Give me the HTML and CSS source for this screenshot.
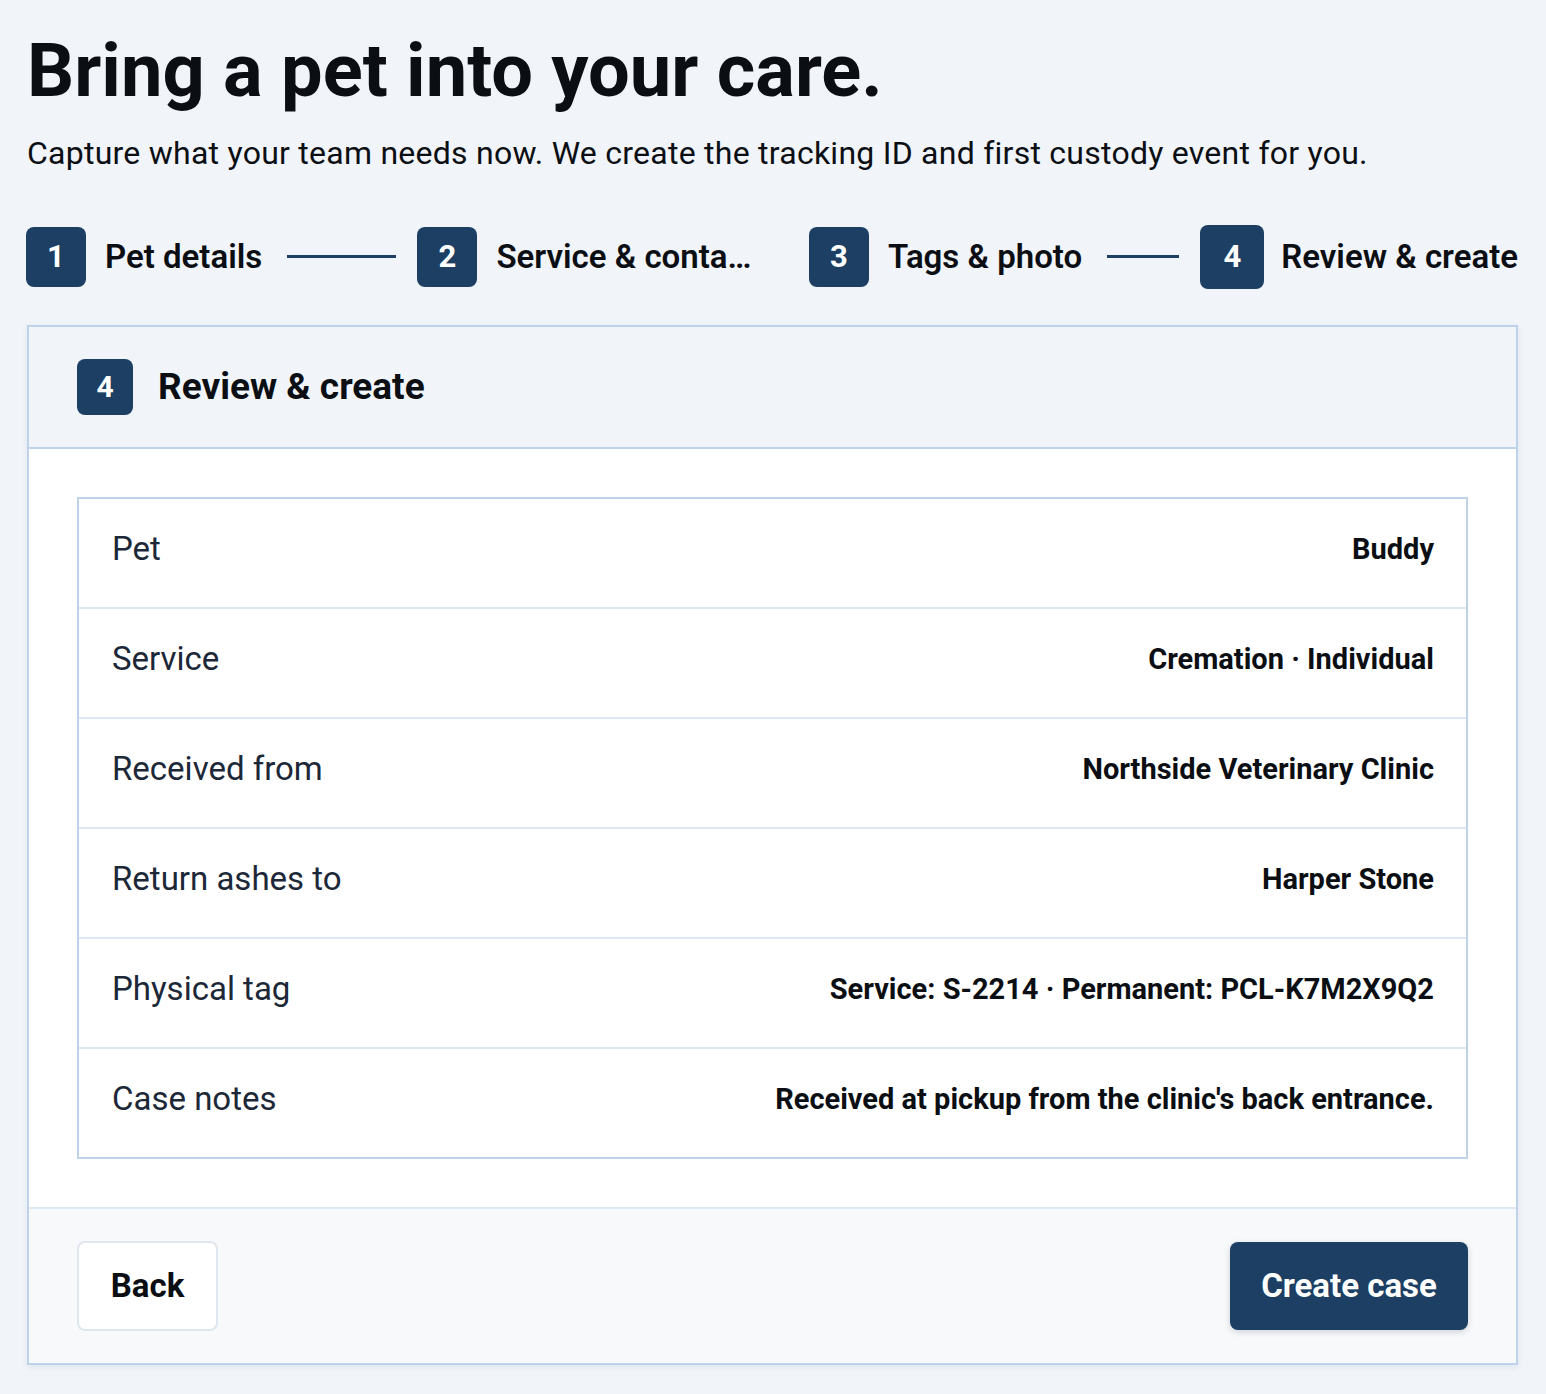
FILE: index.html
```html
<!DOCTYPE html>
<html>
<head>
<meta charset="utf-8">
<title>New case</title>
<link rel="stylesheet" href="styles.css">
</head>
<body>

<main class="page">
	<h1 class="title">Bring a pet into your care.</h1>
	<p class="lead">Capture what your team needs now. We create the tracking ID and first custody event for you.</p>

	<ol class="stepper">
		<li class="step"><span class="badge">1</span><span class="step-label">Pet details</span><span class="connector"></span></li>
		<li class="step"><span class="badge">2</span><span class="step-label">Service &amp; contacts</span><span class="connector"></span></li>
		<li class="step"><span class="badge">3</span><span class="step-label">Tags &amp; photo</span><span class="connector"></span></li>
		<li class="step step-active"><span class="badge">4</span><span class="step-label">Review &amp; create</span></li>
	</ol>

	<section class="card">
		<header class="card-head">
			<span class="badge badge-head">4</span>
			<h2>Review &amp; create</h2>
		</header>

		<div class="card-body">
			<dl class="summary">
				<div class="row"><dt>Pet</dt><dd>Buddy</dd></div>
				<div class="row"><dt>Service</dt><dd>Cremation · Individual</dd></div>
				<div class="row"><dt>Received from</dt><dd>Northside Veterinary Clinic</dd></div>
				<div class="row"><dt>Return ashes to</dt><dd>Harper Stone</dd></div>
				<div class="row"><dt>Physical tag</dt><dd>Service: S-2214 · Permanent: PCL-K7M2X9Q2</dd></div>
				<div class="row"><dt>Case notes</dt><dd>Received at pickup from the clinic's back entrance.</dd></div>
			</dl>
		</div>

		<footer class="card-foot">
			<button class="btn btn-back">Back</button>
			<button class="btn btn-primary">Create case</button>
		</footer>
	</section>
</main>

</body>
</html>
```

FILE: styles.css
```css
body { margin: 0; padding: 0; background-color: #F1F4F9; color: #0B0F14; font-family: Roboto, 'Noto Sans', sans-serif; }
.page { padding: 28px 28px 28px 27px; }

.title { margin: 0; font-size: 74px; font-weight: 700; line-height: 1.15; }
.lead  { margin: 20px 0 0; font-size: 32px; line-height: 1.3; letter-spacing: 0.25px; color: #0B0F14; }

/* stepper */
.stepper { display: flex; gap: 21px; margin: 50px 0 0 -1px; padding: 0; list-style: none; align-items: center; }
.step { flex: 1 1 0; min-width: 0; display: flex; align-items: center; gap: 19px; }
.step-active { flex: none; gap: 17px; }
.step-label { font-size: 33px; font-weight: 600; white-space: nowrap; overflow: hidden; text-overflow: ellipsis; flex: 0 1 auto; min-width: 0; }
.connector { flex: 1 1 0; min-width: 0; height: 3px; margin-left: 6px; background-color: #1C3F63; }

.badge { flex: none; display: flex; align-items: center; justify-content: center; width: 60px; height: 60px; border-radius: 8px; background-color: #1C3F63; color: #FFF; font-size: 31px; font-weight: 700; }
.step-active .badge { width: 64px; height: 64px; }

/* card */
.card { margin-top: 36px; border: 2px solid #BED3EA; background-color: #FFF; box-shadow: 0 2px 6px rgba(28, 63, 99, 0.08); }
.card-head { display: flex; align-items: center; gap: 25px; padding: 32px 48px; background-color: #F1F5FA; border-bottom: 2px solid #BED3EA; }
.card-head h2 { margin: 0; font-size: 37px; font-weight: 700; }
.badge-head { width: 56px; height: 56px; font-size: 30px; }

.card-body { padding: 48px; }
.summary { margin: 0; border: 2px solid #BED3EA; }
.row { display: flex; align-items: center; justify-content: space-between; height: 100px; padding: 0 32px 8px 33px; border-bottom: 2px solid #DDE8F4; }
.row:last-child { border-bottom: none; }
.row dt { font-size: 33px; color: #1C2838; }
.row dd { margin: 0; font-size: 29px; font-weight: 700; text-align: right; }

.card-foot { display: flex; justify-content: space-between; align-items: center; padding: 32px 48px; background-color: #F8F9FB; border-top: 2px solid #DDE8F4; }
.btn { height: 90px; border-radius: 8px; font-family: inherit; font-size: 33px; font-weight: 700; cursor: pointer; }
.btn-back { width: 141px; background-color: #FFF; color: #0B0F14; border: 2px solid #DFE6EE; }
.btn-primary { width: 238px; height: 88px; background-color: #1C3F63; color: #FFF; border: none; box-shadow: 0 2px 6px rgba(11, 31, 51, 0.18); }
```
